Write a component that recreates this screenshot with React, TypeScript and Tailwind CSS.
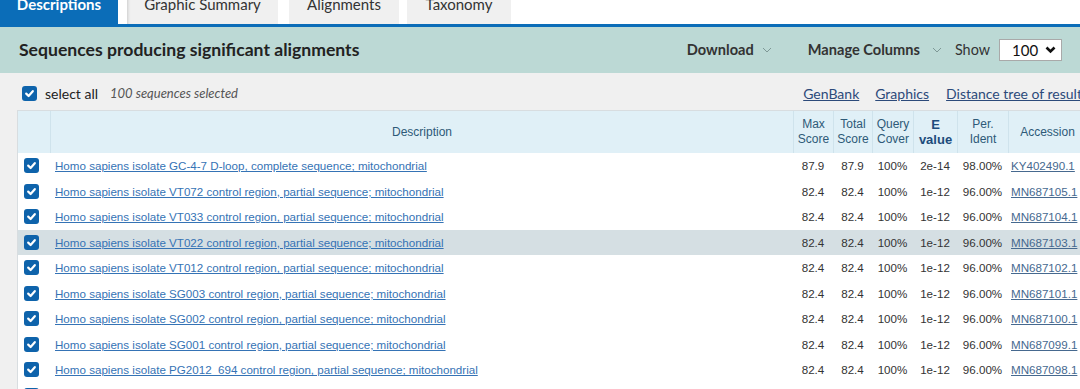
import React from 'react';

type Row = { desc: string; max: string; total: string; cover: string; evalue: string; ident: string; acc: string };

const rows: Row[] = [
    { desc: 'Homo sapiens isolate GC-4-7 D-loop, complete sequence; mitochondrial', max: '87.9', total: '87.9', cover: '100%', evalue: '2e-14', ident: '98.00%', acc: 'KY402490.1' },
    { desc: 'Homo sapiens isolate VT072 control region, partial sequence; mitochondrial', max: '82.4', total: '82.4', cover: '100%', evalue: '1e-12', ident: '96.00%', acc: 'MN687105.1' },
    { desc: 'Homo sapiens isolate VT033 control region, partial sequence; mitochondrial', max: '82.4', total: '82.4', cover: '100%', evalue: '1e-12', ident: '96.00%', acc: 'MN687104.1' },
    { desc: 'Homo sapiens isolate VT022 control region, partial sequence; mitochondrial', max: '82.4', total: '82.4', cover: '100%', evalue: '1e-12', ident: '96.00%', acc: 'MN687103.1' },
    { desc: 'Homo sapiens isolate VT012 control region, partial sequence; mitochondrial', max: '82.4', total: '82.4', cover: '100%', evalue: '1e-12', ident: '96.00%', acc: 'MN687102.1' },
    { desc: 'Homo sapiens isolate SG003 control region, partial sequence; mitochondrial', max: '82.4', total: '82.4', cover: '100%', evalue: '1e-12', ident: '96.00%', acc: 'MN687101.1' },
    { desc: 'Homo sapiens isolate SG002 control region, partial sequence; mitochondrial', max: '82.4', total: '82.4', cover: '100%', evalue: '1e-12', ident: '96.00%', acc: 'MN687100.1' },
    { desc: 'Homo sapiens isolate SG001 control region, partial sequence; mitochondrial', max: '82.4', total: '82.4', cover: '100%', evalue: '1e-12', ident: '96.00%', acc: 'MN687099.1' },
    { desc: 'Homo sapiens isolate PG2012_694 control region, partial sequence; mitochondrial', max: '82.4', total: '82.4', cover: '100%', evalue: '1e-12', ident: '96.00%', acc: 'MN687098.1' },
];

const Check = () => (
    <span className="flex h-[15px] w-[15px] items-center justify-center rounded-[3px] bg-[#0e63ab]">
        <svg width="11" height="11" viewBox="0 0 11 11">
            <polyline points="2.2,5.6 4.6,8 8.8,3.2" fill="none" stroke="#fff" strokeWidth="2.2" strokeLinecap="round" strokeLinejoin="round" />
        </svg>
    </span>
);

const ThinChevron = ({ className }: { className: string }) => (
    <svg width="10" height="6" viewBox="0 0 10 6" className={className}>
        <polyline points="1,1 5,5 9,1" fill="none" stroke="#7e9896" strokeWidth="1" />
    </svg>
);

const cols = 'grid grid-cols-[32px_743px_40px_39px_41px_44px_51px_78px]';

const App: React.FC = () => {
    return (
        <div className="h-[389px] w-[1080px] overflow-hidden bg-white font-['Lato',sans-serif]">
            {/* tabs */}
            <div className="flex h-[24px] items-start overflow-hidden">
                <div className="-mt-[16px] flex h-[40px] w-[118px] items-center justify-center bg-[#0b6db8] text-[15px] font-bold text-white">Descriptions</div>
                <div className="-mt-[16px] ml-[9px] flex h-[40px] w-[151px] items-center justify-center bg-[#f0f0f0] text-[15px] text-[#333] shadow-[inset_3px_0_3px_-2px_rgba(0,0,0,0.15)]">Graphic Summary</div>
                <div className="-mt-[16px] ml-[11px] flex h-[40px] w-[110px] items-center justify-center bg-[#f0f0f0] text-[15px] text-[#333]">Alignments</div>
                <div className="-mt-[16px] ml-[8px] flex h-[40px] w-[104px] items-center justify-center bg-[#f0f0f0] text-[15px] text-[#333]">Taxonomy</div>
            </div>
            <div className="h-[3px] bg-[#0b6db8]" />

            {/* title band */}
            <div className="flex h-[46px] items-center bg-[#bcd9d5] pl-[19px] pr-[18px]">
                <h2 className="text-[17.6px] font-bold text-[#222]">Sequences producing significant alignments</h2>
                <div className="ml-auto flex items-center text-[15px] text-[#333]">
                    <span className="text-[14.6px] font-bold">Download</span>
                    <ThinChevron className="ml-[8px]" />
                    <span className="ml-[36px] text-[14.6px] font-bold">Manage Columns</span>
                    <ThinChevron className="ml-[12px]" />
                    <span className="ml-[13px] text-[14.4px]">Show</span>
                    <div className="ml-[9px] flex h-[22px] w-[63px] items-center border border-[#a9a9a9] bg-white pl-[12px] text-[15px] text-[#111]">
                        100
                        <svg width="11" height="8" viewBox="0 0 11 8" className="ml-[7px]">
                            <polyline points="1.5,1.5 5.5,5.5 9.5,1.5" fill="none" stroke="#111" strokeWidth="2.6" />
                        </svg>
                    </div>
                </div>
            </div>

            {/* body */}
            <div className="bg-[#f0f0f0]">
                <div className="flex h-[37px] items-center pl-[22px] pt-[4px]">
                    <Check />
                    <span className="ml-[8px] text-[14px] text-[#222]">select all</span>
                    <span className="ml-[12px] text-[13px] italic text-[#555]">100 sequences selected</span>
                    <div className="ml-auto -mr-[8px] flex items-center whitespace-nowrap text-[14px] text-[#2c4a7a] underline">
                        <span>GenBank</span>
                        <span className="ml-[16px]">Graphics</span>
                        <span className="ml-[17px]">Distance tree of results</span>
                    </div>
                </div>

                <div className="ml-[17px] w-[1068px] border-l border-t border-[#d8dde0] bg-white font-['Liberation_Sans',Arial,sans-serif] text-[11.6px]">
                    <div className={`${cols} h-[42px] bg-[#e0f0f7] text-[12px] leading-[15px] text-[#2e5a78]`}>
                        <div />
                        <div className="flex items-center justify-center border-l border-[#cfe3ec]">Description</div>
                        <div className="flex items-center justify-center border-l border-[#cfe3ec] text-center">Max<br />Score</div>
                        <div className="flex items-center justify-center border-l border-[#cfe3ec] text-center">Total<br />Score</div>
                        <div className="flex items-center justify-center border-l border-[#cfe3ec] text-center">Query<br />Cover</div>
                        <div className="flex items-center justify-center border-l border-[#cfe3ec] text-center text-[13px] font-bold text-[#1d4c7c]">E<br />value</div>
                        <div className="flex items-center justify-center border-l border-[#cfe3ec] text-center">Per.<br />Ident</div>
                        <div className="flex items-center justify-center border-l border-[#cfe3ec]">Accession</div>
                    </div>
                    {rows.map((r, i) => (
                        <div key={r.acc} className={`${cols} h-[25.5px] items-center text-[#333] ${i === 3 ? 'bg-[#d5dfe3]' : ''}`}>
                            <div className="pl-[6px]"><Check /></div>
                            <div className="truncate pl-[5px] text-[#3573b5] underline">{r.desc}</div>
                            <div className="text-center">{r.max}</div>
                            <div className="text-center">{r.total}</div>
                            <div className="text-center">{r.cover}</div>
                            <div className="text-center">{r.evalue}</div>
                            <div className="text-center">{r.ident}</div>
                            <div className="pl-[3px] text-[#46698f] underline">{r.acc}</div>
                        </div>
                    ))}
                    <div className={`${cols} h-[25.5px] items-center`}>
                        <div className="pl-[6px]"><Check /></div>
                    </div>
                </div>
            </div>
        </div>
    );
};

export default App;
